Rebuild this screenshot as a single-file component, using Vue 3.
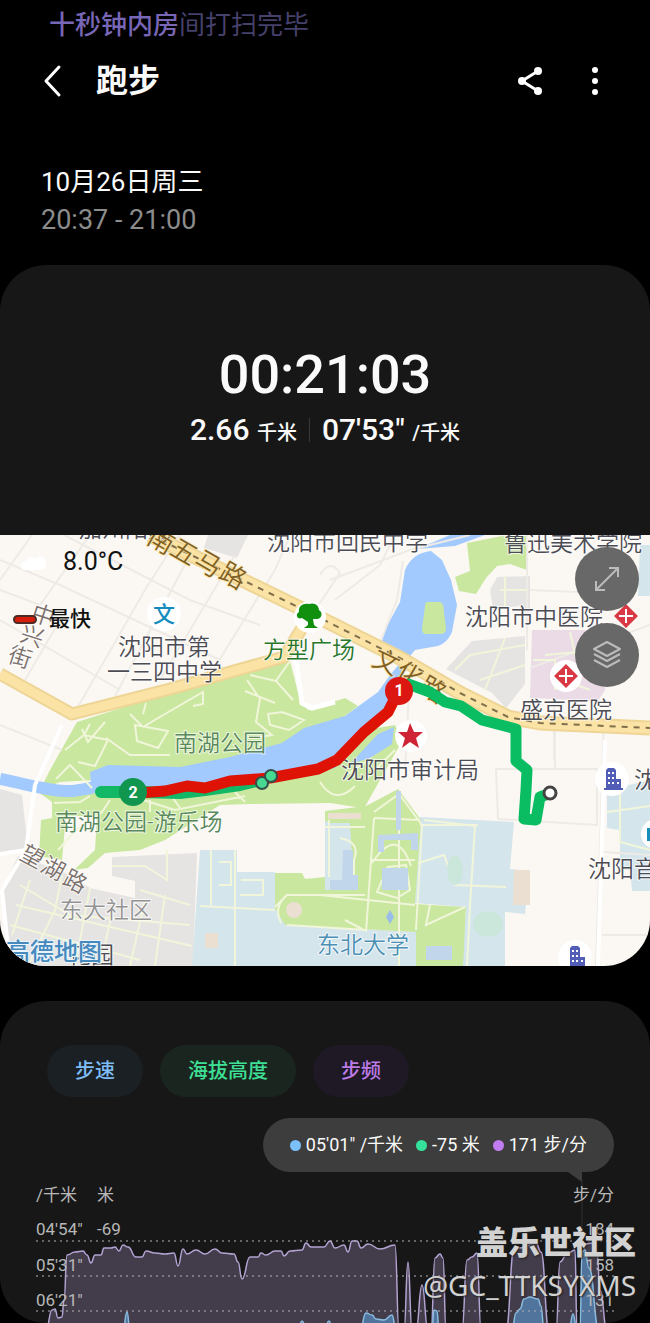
<script setup>
import { ref } from 'vue';

const tabs = [
    { key: 'pace', name: '步速' },
    { key: 'altitude', name: '海拔高度' },
    { key: 'cadence', name: '步频' }
];
const activeTab = ref('altitude');

const tooltip = [
    { key: 'pace', text: '05\'01" /千米' },
    { key: 'altitude', text: '-75 米' },
    { key: 'cadence', text: '171 步/分' }
];

// 地图文字
const labels = [
    { text: '沈阳市回民中学', x: 267, y: 550, type: 'place' },
    { text: '鲁迅美术学院', x: 504, y: 551, type: 'place' },
    { text: '沈阳市中医院', x: 465, y: 625, type: 'place' },
    { text: '沈阳市第', x: 118, y: 655, type: 'place' },
    { text: '一三四中学', x: 107, y: 680, type: 'place' },
    { text: '盛京医院', x: 520, y: 718, type: 'place' },
    { text: '沈阳市审计局', x: 341, y: 778, type: 'place' },
    { text: '沈阳音', x: 588, y: 877, type: 'place' },
    { text: '沈', x: 634, y: 788, type: 'place' },
    { text: '加州阳光', x: 79, y: 537, type: 'place' },
    { text: '花园', x: 68, y: 963, type: 'place' },
    { text: '方型广场', x: 263, y: 658, type: 'square' },
    { text: '南湖公园', x: 174, y: 751, type: 'park' },
    { text: '南湖公园-游乐场', x: 55, y: 830, type: 'park' },
    { text: '东大社区', x: 60, y: 918, type: 'area' },
    { text: '东北大学', x: 317, y: 953, type: 'school' }
];

// 沿道路排列的文字
const roadLabels = [
    { text: '南', x: 161, y: 541, angle: 30, type: 'main' },
    { text: '五', x: 184, y: 552, angle: 30, type: 'main' },
    { text: '马', x: 208, y: 564, angle: 30, type: 'main' },
    { text: '路', x: 233, y: 576, angle: 30, type: 'main' },
    { text: '文', x: 386, y: 662, angle: 25, type: 'main' },
    { text: '化', x: 409, y: 675, angle: 30, type: 'main' },
    { text: '路', x: 433, y: 690, angle: 30, type: 'main' },
    { text: '中', x: 43, y: 616, angle: 18, type: 'side' },
    { text: '兴', x: 32, y: 637, angle: 18, type: 'side' },
    { text: '街', x: 20, y: 658, angle: 18, type: 'side' },
    { text: '望', x: 32, y: 857, angle: 28, type: 'side' },
    { text: '湖', x: 53, y: 869, angle: 28, type: 'side' },
    { text: '路', x: 75, y: 882, angle: 28, type: 'side' }
];

const axisRows = [
    { y: 1235, line: 1241, pace: '04\'54"', height: '-69', step: '184' },
    { y: 1271, line: 1276, pace: '05\'31"', height: '', step: '158' },
    { y: 1306, line: 1311, pace: '06\'21"', height: '', step: '131' }
];

const stepPoints = [
    [46, 1330], [52, 1310], [55, 1309], [58, 1318], [62, 1317], [64, 1300], [67, 1255], [75, 1252],
    [83, 1251], [87, 1255], [91, 1263], [95, 1255], [101, 1255], [104, 1248], [111, 1248], [115, 1247],
    [119, 1251], [123, 1245], [128, 1247], [136, 1257], [142, 1257], [146, 1251], [155, 1253], [165, 1254],
    [174, 1253], [178, 1266], [183, 1249], [187, 1254], [196, 1250], [205, 1254], [215, 1249], [222, 1253],
    [234, 1254], [238, 1262], [242, 1279], [250, 1257], [258, 1257], [261, 1253], [266, 1255], [275, 1251],
    [281, 1251], [284, 1256], [290, 1251], [302, 1250], [306, 1243], [311, 1247], [324, 1247], [330, 1241],
    [335, 1248], [344, 1245], [348, 1252], [352, 1241], [357, 1241], [361, 1248], [368, 1244], [380, 1249],
    [395, 1245], [399, 1330], [404, 1330], [408, 1262], [412, 1330], [416, 1330], [422, 1285], [428, 1330],
    [431, 1330], [435, 1258], [440, 1254], [443, 1258], [446, 1330], [462, 1330], [467, 1260], [472, 1257],
    [477, 1253], [481, 1330], [506, 1330], [514, 1250], [520, 1248], [536, 1243], [541, 1252], [549, 1330],
    [556, 1330], [560, 1262], [567, 1254], [575, 1250], [577, 1330], [580, 1330], [585, 1244], [592, 1243],
    [597, 1252], [600, 1290], [607, 1330]
];

const pacePoints = [
    [123, 1330], [127, 1312], [130, 1330], [298, 1330], [302, 1321], [307, 1330], [324, 1330], [329, 1321],
    [333, 1330], [360, 1330], [366, 1313], [372, 1315], [376, 1319], [384, 1320], [392, 1315], [396, 1330],
    [432, 1330], [434, 1310], [437, 1311], [439, 1330], [512, 1330], [516, 1313], [520, 1309], [524, 1299],
    [530, 1297], [538, 1299], [541, 1306], [544, 1330], [569, 1330], [573, 1314], [577, 1330], [580, 1330],
    [582, 1252], [585, 1250], [589, 1268], [599, 1330]
];

// 折线转平滑曲线
function smooth(points) {
    let d = `M${points[0][0]} ${points[0][1]}`;
    for (let i = 1; i < points.length; i++) {
        const [x0, y0] = points[i - 1];
        const [x1, y1] = points[i];
        const mid = (x0 + x1) / 2;
        d += ` C${mid} ${y0} ${mid} ${y1} ${x1} ${y1}`;
    }
    return d;
}
</script>

<template>
    <div class="page">
        <div class="notice"><b>十秒钟内房</b>间打扫完毕</div>
        <header class="topbar">
            <button class="iconBtn" aria-label="返回">
                <svg width="22" height="34" viewBox="0 0 22 34"><path d="M18 3 5 17 18 31" fill="none" stroke="#fff" stroke-width="3" stroke-linecap="round" stroke-linejoin="round" /></svg>
            </button>
            <h1>跑步</h1>
            <button class="iconBtn" aria-label="分享">
                <svg width="28" height="30" viewBox="0 0 28 30">
                    <path d="M22 5 6 15 22 25" fill="none" stroke="#fff" stroke-width="3" />
                    <circle cx="22" cy="5" r="4" fill="#fff" /><circle cx="6" cy="15" r="4" fill="#fff" /><circle cx="22" cy="25" r="4" fill="#fff" />
                </svg>
            </button>
            <button class="iconBtn" aria-label="更多">
                <svg width="8" height="30" viewBox="0 0 8 30"><g fill="#fff"><circle cx="4" cy="4" r="3" /><circle cx="4" cy="15" r="3" /><circle cx="4" cy="26" r="3" /></g></svg>
            </button>
        </header>
        <div class="date">
            <div class="day">10月26日周三</div>
            <div class="time">20:37 - 21:00</div>
        </div>

        <section class="card">
            <div class="summary">
                <div class="duration">00:21:03</div>
                <div class="result">
                    <span>2.66 <small>千米</small></span>
                    <i></i>
                    <span>07'53" <small>/千米</small></span>
                </div>
            </div>
            <div class="mapBox">
                <svg class="map" viewBox="0 535 650 431">
                    <rect y="535" width="650" height="431" fill="#fbf8f3" />
                    <!-- 建筑区块 -->
                    <g fill="#e6e4e3">
                        <path d="M208 535H248L237 558 204 548z" />
                        <path d="M0 789 22 795 28 848 0 853z" />
                        <path d="M18 856 60 870 90 888 135 898V881L112 876V857L197 853 193 966H6L2 890z" />
                        <path d="M497 577 530 576V612L522 606 493 608 490 590z" />
                        <path d="M472 641 525 636V684L506 708 492 693 446 669z" />
                    </g>
                    <path d="M532 630H602L605 690 598 701 530 698z" fill="#eadbe6" />
                    <g fill="#d5e5ec">
                        <path d="M200 850H237V872H275L276 905 285 925 420 932V966H192z" />
                        <path d="M420 817 514 822 510 869 530 871 525 914 505 912V966H462L466 907 415 903z" />
                        <path d="M607 790 650 780V891H632L630 870 620 870V830L607 828z" />
                        <path d="M640 545H650V596H638z" />
                        <path d="M325 815H362V890H325z" />
                    </g>
                    <!-- 绿地 -->
                    <g fill="#c9e79f">
                        <path d="M77 722 140 702 290 661 300 700 308 710 345 698 358 706 320 735 180 775 60 782 40 790 50 770z" />
                        <path d="M34 789 130 780 300 770 335 735 395 725 402 741 362 812 355 786 362 808 330 803 250 804 220 805 165 840 140 850 105 853 88 868 74 870 95 850 97 816H66L62 860 39 856 41 820 52 818V802z" />
                        <path d="M467 543 502 536H527V570L510 564 497 566 486 578 476 594 459 591 455 577 470 571z" />
                        <path d="M366 806 398 789 421 820 415 904 466 907 463 966H416V932L285 925 275 908V873H302L305 879 325 877V811z" />
                    </g>
                    <path d="M329 823H350L354 890H325V820z" fill="#d5e5ec" />
                    <!-- 水面 -->
                    <path d="M0 779C30 785 45 790 65 791S95 784 110 786" fill="none" stroke="#a2caff" stroke-width="12" />
                    <path d="M90 772 108 765 180 767 230 757 282 743 304 728 345 716 378 692 390 675 401 662 398 653 382 641 387 626 400 602 405 570Q412 553 431 551L442 560 451 580 457 605 452 632Q446 646 432 647L415 650 406 661 396 685 398 700 380 722 350 748 335 768 250 780 132 793 91 784z" fill="#a2caff" />
                    <path d="M378 734 394 727 392 744 370 758 350 764z" fill="#a2caff" />
                    <path d="M428 602H440Q444 603 444 612L446 629Q446 634 440 634H426Q422 634 422 629L425 606Q425 602 428 602z" fill="#c9e79f" />
                    <path d="M417 549 450 535H485L455 546z" fill="#a2caff" />
                    <!-- 小路 -->
                    <g fill="none" stroke="#eeeae6" stroke-width="2">
                        <path d="M0 590 40 605 95 528M0 560 60 585 220 660M64 535 190 600 260 625M32 535 0 580M75 712 145 590 180 535M115 696 190 555M160 680 235 555M25 680 60 620M215 667 275 570 290 535M0 620 120 690M395 535 380 565 335 600M330 580 410 550 470 535M320 575Q330 558 340 573L318 606M403 561 397 600 381 640M409 690 405 770M527 535V650M530 590 600 593M554 700V760M0 725 62 750M530 668 650 625" />
                        <path d="M496 769H597V825L498 819zM604 720 596 966M603 852 650 855M602 935H650M555 725V770" />
                    </g>
                    <g fill="none" stroke="#f1f6da" stroke-width="2">
                        <path d="M82 729 88 742 105 722M65 750 84 735 108 740 95 766 78 762M84 735 90 724M130 714 143 727 165 714 203 692V704L193 706M143 714 146 703M135 725 168 731 158 748 137 741zM106 738 130 755 170 755M247 680 260 699 256 722 272 735 252 738M290 661 276 681 293 700M276 681 250 675M268 714 282 712 304 720 289 730 270 725zM245 691 275 703M56 779 70 765 92 788M110 800 102 812 76 830 58 850M90 796 80 802 54 803M140 799 175 810 245 796M150 800V812M170 794 180 808M235 792 245 802M320 782Q335 806 355 786M346 775 372 758M365 780 395 750" />
                        <path d="M399 792V966M374 812 399 794 422 825 416 930M374 818 420 820M370 860H415M374 818 366 932M372 863Q397 825 411 866M388 867 406 865 410 890 397 898 377 892zM275 907 287 895H365M281 923Q273 907 287 895M287 925 366 930M320 895 415 905M430 905 426 925 465 907M345 920 364 930M325 827 365 827M340 838Q361 842 354 860V882" />
                        <path d="M329 820V877M424 820 475 826 470 905 467 966M418 863 444 855 455 885 506 887M420 825H478M235 850V966M200 906 275 910M211 850V905M219 862H231V885H219M241 880H263V895H240" />
                        <path d="M112 866H145L167 880V850M140 890 190 905M62 875 55 910 30 962M20 885 70 915 190 925M16 905 192 946M30 880 12 935M90 888 75 966M115 900 100 966M145 900 130 966M165 895 155 966M10 925 140 960M620 790V842L650 850M607 812 650 806" />
                        <path d="M500 590H527M505 576V606M525 645 470 655 455 670M505 638 485 690M525 665 480 680M533 660H555V690M545 655 600 650M555 677 590 690M570 632 580 675" />
                    </g>
                    <g fill="none" stroke="#fff" stroke-width="4">
                        <path d="M62 725 35 785 26 850 2 890M26 850 0 854M605 740 598 966M2 890 10 966" />
                        <path d="M296 660 302 703 312 708 335 702" stroke-width="5" />
                    </g>
                    <g fill="#c1d6ea">
                        <path d="M378 835 418 833V850H411V840H384V852H378zM382 868H408V890H382zM426 946H452V960H426z" />
                        <path d="M343 850H353V875H358V890H330V880H342zM396 791H401V830H396z" />
                    </g>
                    <g fill="#eadfd1"><circle cx="294" cy="910" r="8" /><path d="M205 933H218V948H205zM514 870H530V905H513zM328 813H361V819H328z" /></g>
                    <ellipse cx="455" cy="870" rx="8" ry="15" fill="#cbe7dc" />
                    <ellipse cx="488" cy="924" rx="15" ry="13" fill="#cbe7dc" />
                    <path d="M390 910 394 917 390 924 386 917z" fill="#99bce8" />
                    <!-- 主路 -->
                    <g fill="none" stroke-linejoin="round">
                        <g stroke="#eed596">
                            <path d="M0 674 72 714 170 689 284 657 312 612" stroke-width="13" />
                            <path d="M150 535 300 608 400 658 460 693 508 717 540 723 650 728" stroke-width="15" />
                        </g>
                        <g stroke="#fbe3a6">
                            <path d="M0 674 72 714 170 689 284 657 312 612" stroke-width="9" />
                            <path d="M150 535 300 608 400 658 460 693 508 717 540 723 650 728" stroke-width="11" />
                        </g>
                        <path d="M150 535 300 608 400 658 460 693 508 717 540 723 650 728" stroke="#806f4b" stroke-width="2" stroke-dasharray="6 6" />
                    </g>
                    <g class="mapText">
                        <text v-for="item in labels" :key="item.text" :class="item.type" :x="item.x" :y="item.y">{{ item.text }}</text>
                        <text v-for="item in roadLabels" :key="item.text + item.x" :class="item.type" :x="item.x" :y="item.y" text-anchor="middle" dominant-baseline="central" :transform="`rotate(${item.angle} ${item.x} ${item.y})`">{{ item.text }}</text>
                    </g>
                    <!-- 运动轨迹 -->
                    <g fill="none" stroke-linecap="round" stroke-linejoin="round">
                        <path d="M101 792H140L180 793 205 790 240 785 265 779" stroke="#12b866" stroke-width="12" />
                        <path d="M408 684 430 692 445 702 461 706 482 720 516 729 516 761 527 770 526 790 524 819 536 820 540 797 548 794" stroke="#0abd63" stroke-width="11" />
                        <path d="M398 692 388 712 364 732 337 760 318 769 270 778 230 781 205 788 187 786 165 791 138 793" stroke="#df1305" stroke-width="11" />
                    </g>
                    <g class="marker">
                        <circle cx="133" cy="792" r="14" fill="#10964f" /><text x="133" y="798">2</text>
                        <circle cx="399" cy="691" r="14" fill="#dc1711" /><text x="399" y="696">1</text>
                    </g>
                    <g stroke="#36504b" stroke-width="2" fill="#45d991"><circle cx="262" cy="783" r="6" /><circle cx="271" cy="776" r="6" /></g>
                    <circle cx="550" cy="793" r="6" fill="#fff" stroke="#444" stroke-width="3" />
                    <!-- 地点图标 -->
                    <g fill="#fff"><circle cx="164" cy="614" r="17" /><circle cx="310" cy="617" r="16" /><circle cx="566" cy="676" r="16" /><circle cx="411" cy="736" r="16" /><circle cx="612" cy="779" r="17" /><circle cx="575" cy="957" r="17" /><circle cx="656" cy="834" r="15" /></g>
                    <text class="poi" x="153" y="622">文</text>
                    <path d="M309 604C315 602 319 606 319 610 324 613 321 620 316 619H313L314 625 318 628H304L308 625V622L302 618C297 620 295 614 299 612 298 606 303 603 309 604z" fill="#11900f" />
                    <path d="M410 723 414 732 423 732 416 738 419 748 410 742 402 748 405 738 398 732 407 732z" fill="#cf2436" />
                    <g fill="#d93945"><path d="M566 664 578 676 566 688 554 676zM626 604 638 616 626 628 614 616z" /></g>
                    <path d="M566 669V683M559 676H573M626 609V623M619 616H633" stroke="#fff" stroke-width="2" />
                    <g id="tower"><path d="M606 770 608 768H614L616 770V779H621V788H623V790H604V788H606z" fill="#525db5" /><path d="M608 773H610M612 773H614M608 778H610M612 778H614M608 783H610M612 783H614M617 783H619" stroke="#fff" stroke-width="2" /></g>
                    <use href="#tower" x="-36" y="178" />
                    <path d="M647 828H650V841H647z" fill="#188fbb" />
                    <text class="brand" x="6" y="960">高德地图</text>
                </svg>
                <div class="weather">
                    <svg width="28" height="20" viewBox="0 0 28 20"><path d="M6 18C0 18 0 10 7 9 8 4 14 4 16 7 22 1 28 7 27 12 27 16 24 18 21 18z" fill="#fff" /></svg>
                    <span>8.0°C</span>
                </div>
                <div class="fastest"><i></i><span>最快</span></div>
                <div class="mapBtns">
                    <button aria-label="全屏">
                        <svg width="28" height="28" viewBox="0 0 28 28" fill="none" stroke="#bbb" stroke-width="2"><path d="M3 25 25 3M16 3H25V12M3 16V25H12" /></svg>
                    </button>
                    <button aria-label="图层">
                        <svg width="30" height="30" viewBox="0 0 30 30" fill="none" stroke="#bbb" stroke-width="2" stroke-linejoin="round"><path d="M15 2 28 9 15 16 2 9zM2 14 15 21 28 14M2 20 15 27 28 20" /></svg>
                    </button>
                </div>
            </div>
        </section>

        <section class="card chartCard">
            <div class="tabs">
                <button v-for="tab in tabs" :key="tab.key" :class="[tab.key, { active: activeTab === tab.key }]" @click="activeTab = tab.key">{{ tab.name }}</button>
            </div>
            <div class="tooltip">
                <span v-for="item in tooltip" :key="item.key" :class="item.key"><i></i>{{ item.text }}</span>
            </div>
            <svg class="chart" viewBox="0 1172 650 151">
                <path d="M568 1172H582V1182z" fill="#3d3d3d" />
                <path d="M582 1180V1323" stroke="#303030" stroke-width="1" />
                <path :d="smooth(stepPoints)" fill="#433c4b" stroke="#b3a3d2" stroke-width="1.5" />
                <path :d="smooth(pacePoints)" fill="#50749b" stroke="#8abce0" stroke-width="1.5" />
                <g class="axis">
                    <text x="36" y="1201">/千米</text>
                    <text x="97" y="1201">米</text>
                    <text x="614" y="1201" text-anchor="end">步/分</text>
                    <g v-for="row in axisRows" :key="row.y">
                        <path :d="`M36 ${row.line}H614`" stroke="#b5b2b8" stroke-width="1" stroke-dasharray="2 4" />
                        <text x="36" :y="row.y">{{ row.pace }}</text>
                        <text v-if="row.height" x="97" :y="row.y">{{ row.height }}</text>
                        <text x="614" :y="row.y" text-anchor="end">{{ row.step }}</text>
                    </g>
                </g>
            </svg>
            <div class="watermark">
                <b>盖乐世社区</b>
                <span>@GC_TTKSYXMS</span>
            </div>
        </section>
    </div>
</template>

<style>
body {
    margin: 0;
    background: #000;
}
</style>

<style scoped>
.page {
    background: #000;
    color: #fafafa;
    font-family: Roboto, "Noto Sans CJK SC", sans-serif;
    overflow: hidden;
}

button {
    border: 0;
    padding: 0;
    background: none;
    font-family: inherit;
    cursor: pointer;
}

svg {
    display: block;
}

/* ————————顶部———————— */
.notice {
    padding: 7px 49px 0;
    font-size: 26px;
    line-height: 36px;
    color: #46406c;
}

.notice b {
    font-weight: 500;
    color: #7866b6;
}

.topbar {
    display: flex;
    align-items: center;
    height: 76px;
    padding: 0 51px 0 41px;
}

.topbar h1 {
    flex: 1;
    margin: 0 0 0 33px;
    font-size: 32px;
    line-height: 40px;
    font-weight: 700;
}

.topbar .iconBtn:last-child {
    margin-left: 47px;
}

.date {
    padding: 44px 41px 26px;
}

.day {
    font-size: 26px;
    line-height: 38px;
}

.time {
    font-size: 27px;
    line-height: 38px;
    color: #8c8c8c;
}

/* ————————卡片———————— */
.card {
    position: relative;
    border-radius: 46px;
    background: #171717;
    overflow: hidden;
}

.summary {
    display: flex;
    flex-direction: column;
    align-items: center;
    padding: 77px 0 83px;
}

.duration {
    font-size: 54px;
    line-height: 66px;
    font-weight: 500;
}

.result {
    display: flex;
    align-items: center;
    gap: 12px;
    height: 44px;
    font-size: 30px;
    line-height: 44px;
    font-weight: 500;
}

.result small {
    font-size: 20px;
    line-height: 20px;
}

.result i {
    width: 1px;
    height: 24px;
    background: #383838;
}

/* ————————地图———————— */
.mapBox {
    position: relative;
}

.map {
    width: 100%;
}

.mapText text {
    font-size: 23px;
    font-weight: 350;
    fill: #4c4c54;
    stroke: #fff;
    stroke-width: 2px;
    stroke-opacity: 0.7;
    paint-order: stroke;
}

.mapText .square {
    fill: #28762a;
}

.mapText .park {
    fill: #58885b;
}

.mapText .area {
    fill: #939393;
}

.mapText .school {
    fill: #4b8fb5;
}

.mapText .main {
    font-size: 26px;
    fill: #806023;
    stroke: #fbe3a6;
}

.mapText .side {
    fill: #7b706c;
}

.poi {
    font-size: 22px;
    font-weight: 500;
    fill: #148bbd;
}

.brand {
    font-size: 24px;
    font-weight: 500;
    fill: #4689bd;
    stroke: #eaf4fa;
    stroke-width: 2px;
    paint-order: stroke;
}

.marker text {
    font-size: 16px;
    font-weight: 700;
    fill: #fff;
    text-anchor: middle;
}

.weather {
    position: absolute;
    top: 12px;
    left: 19px;
    display: flex;
    align-items: center;
    gap: 16px;
    font-size: 25px;
    line-height: 30px;
    color: #111;
}

.fastest {
    position: absolute;
    top: 70px;
    left: 13px;
    display: flex;
    align-items: center;
    gap: 12px;
    font-size: 21px;
    line-height: 28px;
    font-weight: 500;
    color: #111;
}

.fastest i {
    box-sizing: border-box;
    width: 24px;
    height: 9px;
    border: 2px solid #4c2b27;
    border-radius: 5px;
    background: #d81c0c;
}

.mapBtns {
    position: absolute;
    top: 12px;
    right: 11px;
    display: flex;
    flex-direction: column;
    gap: 12px;
}

.mapBtns button {
    display: flex;
    align-items: center;
    justify-content: center;
    width: 64px;
    height: 64px;
    border-radius: 50%;
    background: #686868;
}

/* ————————图表———————— */
.chartCard {
    margin-top: 35px;
}

.tabs {
    display: flex;
    gap: 17px;
    padding: 44px 47px 0;
}

.tabs button {
    padding: 0 28px;
    border-radius: 26px;
    font-size: 20px;
    line-height: 52px;
    font-weight: 500;
}

.tabs .pace {
    color: #7fbcf5;
    background: #1a2024;
}

.tabs .altitude {
    color: #3ee096;
}

.tabs .active {
    background: #1a2520;
}

.tabs .cadence {
    color: #bd7be8;
    background: #1e1924;
}

.tooltip {
    display: flex;
    gap: 13px;
    width: fit-content;
    margin: 21px 36px 0 auto;
    padding: 0 27px;
    border-radius: 27px;
    font-size: 18px;
    line-height: 54px;
    background: #3d3d3d;
}

.tooltip span {
    display: flex;
    align-items: center;
    gap: 5px;
    white-space: pre;
}

.tooltip i {
    width: 11px;
    height: 11px;
    border-radius: 50%;
}

.tooltip .pace i {
    background: #7cc0fb;
}

.tooltip .altitude i {
    background: #35e29b;
}

.tooltip .cadence i {
    background: #c17cf0;
}

.chart {
    width: 100%;
}

.axis text {
    font-size: 17px;
    fill: #b8b8b8;
}

.watermark {
    position: absolute;
    right: 14px;
    bottom: 18px;
    display: flex;
    flex-direction: column;
    align-items: flex-end;
    color: #d2d2d2;
    text-shadow: 1px 1px 2px #222;
}

.watermark b {
    font-size: 32px;
    line-height: 44px;
    font-weight: 900;
}

.watermark span {
    font-family: "Noto Sans", sans-serif;
    font-size: 28px;
    line-height: 40px;
}
</style>
